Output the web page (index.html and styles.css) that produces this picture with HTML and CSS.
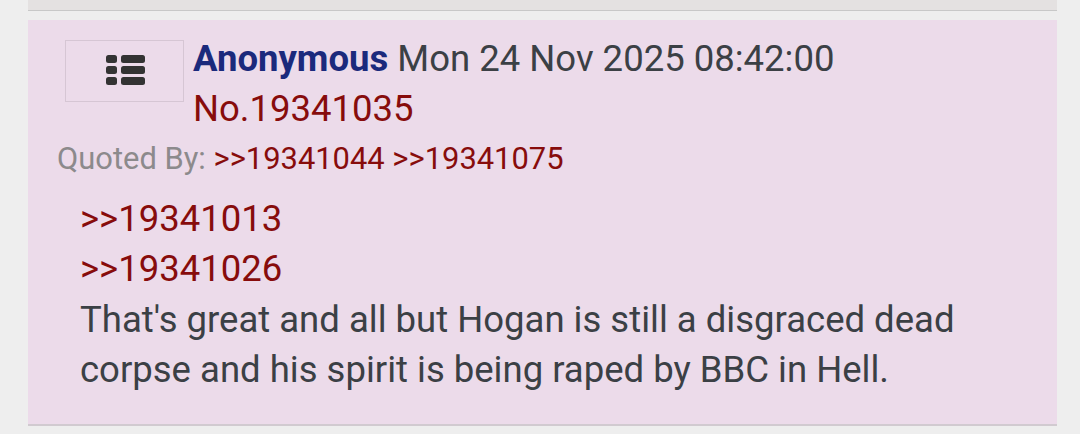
FILE: index.html
```html
<!DOCTYPE html>
<html lang="en">
<head>
    <meta charset="UTF-8">
    <meta name="viewport" content="width=device-width, initial-scale=1.0">
    <title>Thread</title>
    <link rel="stylesheet" href="styles.css">
</head>
<body>
    <div class="prev-post"></div>
    <div class="post">
        <div class="post-head">
            <button class="menu-button" aria-label="Post menu">
                <svg width="39" height="30" viewBox="0 0 39 30">
                    <rect x="0" y="0" width="11" height="8" rx="2.5"/>
                    <rect x="15" y="0" width="24" height="8" rx="2.5"/>
                    <rect x="0" y="11" width="11" height="8" rx="2.5"/>
                    <rect x="15" y="11" width="24" height="8" rx="2.5"/>
                    <rect x="0" y="22" width="11" height="8" rx="2.5"/>
                    <rect x="15" y="22" width="24" height="8" rx="2.5"/>
                </svg>
            </button>
            <div class="post-info">
                <span class="name">Anonymous</span> <span class="date">Mon 24 Nov 2025 08:42:00</span>
                <a class="post-num">No.19341035</a>
            </div>
        </div>
        <div class="backlinks">
            <span class="label">Quoted By:</span> <a class="quote">&gt;&gt;19341044</a> <a class="quote">&gt;&gt;19341075</a>
        </div>
        <blockquote class="message">
            <a class="quote">&gt;&gt;19341013</a><br>
            <a class="quote">&gt;&gt;19341026</a><br>
            That's great and all but Hogan is still a disgraced dead corpse and his spirit is being raped by BBC in Hell.
        </blockquote>
    </div>
</body>
</html>
```

FILE: styles.css
```css
body {
    margin: 0;
    background: #eeeeee;
    font-family: Roboto, "Noto Sans", sans-serif;
    color: #3b4045;
}
.prev-post {
    height: 10px;
    margin: 0 23px 0 28px;
    background: #e4e1e1;
    border-bottom: 1px solid #c8c8c8;
}
.post {
    margin: 9px 23px 0 28px;
    padding: 14px 40px 28px 0;
    background: #ecdbea;
    border-bottom: 2px solid #d1cad0;
}
.post-head {
    display: flex;
    align-items: flex-start;
}
.menu-button {
    display: flex;
    align-items: center;
    justify-content: center;
    width: 119px;
    height: 62px;
    margin: 6px 0 0 37px;
    padding: 0 0 2px 2px;
    background: transparent;
    border: 1px solid #d6c6d4;
    fill: #333333;
    cursor: pointer;
}
.post-info {
    margin-left: 9px;
    font-size: 36.5px;
    line-height: 50px;
}
.name {
    font-weight: bold;
    color: #1b2a7c;
}
.date {
    color: #3b4045;
}
.post-num {
    display: block;
    color: #870c0c;
}
.backlinks {
    padding-left: 29px;
    font-size: 30.9px;
    line-height: 50px;
}
.backlinks .label {
    color: #8c8a8c;
}
.quote {
    color: #870c0c;
}
.message {
    margin: 10px 0 0 52px;
    font-size: 36.5px;
    line-height: 50.4px;
}
```
